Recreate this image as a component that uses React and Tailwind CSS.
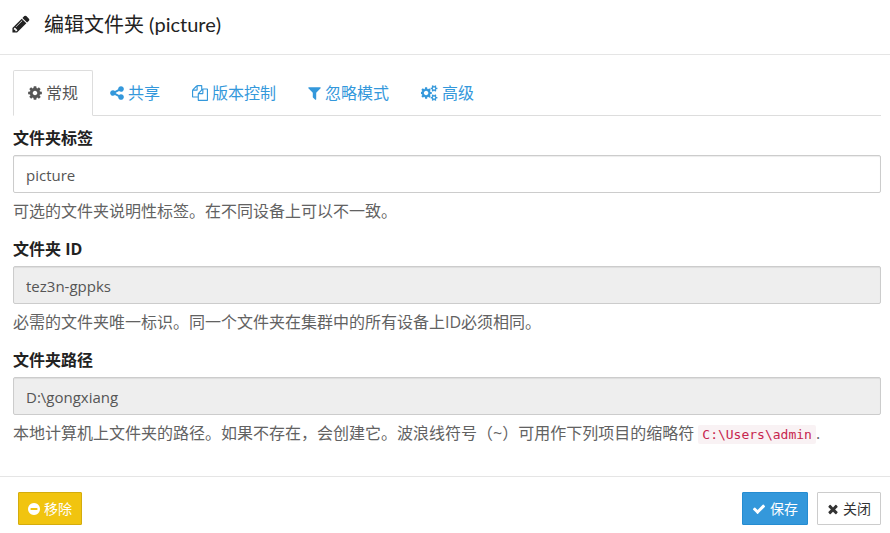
import React, { useState } from "react";

// Font glyph icons, drawn on a 1792 unit em
const icons = {
  pencil: {
    viewBox: "128 0 1536 1792",
    d: "M491 1536l91-91-235-235-91 91v107h128v128h107zm523-928q0-22-22-22-10 0-17 7l-542 542q-7 7-7 17 0 22 22 22 10 0 17-7l542-542q7-7 7-17zm-54-192l416 416-832 832h-416v-416zm683 96q0 53-37 90l-166 166-416-416 166-165q36-38 90-38 53 0 91 38l235 234q37 39 37 91z",
  },
  cog: {
    viewBox: "128 0 1536 1792",
    d: "M1152 896q0-106-75-181t-181-75-181 75-75 181 75 181 181 75 181-75 75-181zm512-109v222q0 12-8 23t-20 13l-185 28q-19 54-39 91 35 50 107 138 10 12 10 25t-9 23q-27 37-99 108t-94 71q-12 0-26-9l-138-108q-44 23-91 38-16 136-29 186-7 28-36 28h-222q-14 0-24.5-8.5t-11.5-21.5l-28-184q-49-16-90-37l-141 107q-10 9-25 9-14 0-25-11-126-114-165-168-7-10-7-23 0-12 8-23 15-21 51-66.5t54-70.5q-27-50-41-99l-183-27q-13-2-21-12.5t-8-23.5v-222q0-12 8-23t19-13l186-28q14-46 39-92-40-57-107-138-10-12-10-24 0-10 9-23 26-36 98.5-107.5t94.5-71.5q13 0 26 10l138 107q44-23 91-38 16-136 29-186 7-28 36-28h222q14 0 24.5 8.5t11.5 21.5l28 184q49 16 90 37l142-107q9-9 24-9 13 0 25 10 129 119 165 170 7 8 7 22 0 12-8 23-15 21-51 66.5t-54 70.5q26 50 41 98l183 28q13 2 21 12.5t8 23.5z",
  },
  share: {
    viewBox: "128 0 1536 1792",
    d: "M1344 1024q133 0 226.5 93.5t93.5 226.5-93.5 226.5-226.5 93.5-226.5-93.5-93.5-226.5q0-12 2-34l-360-180q-92 86-218 86-133 0-226.5-93.5t-93.5-226.5 93.5-226.5 226.5-93.5q126 0 218 86l360-180q-2-22-2-34 0-133 93.5-226.5t226.5-93.5 226.5 93.5 93.5 226.5-93.5 226.5-226.5 93.5q-126 0-218-86l-360 180q2 22 2 34t-2 34l360 180q92-86 218-86z",
  },
  files: {
    viewBox: "0 0 1792 1792",
    d: "M1696 384q40 0 68 28t28 68v1216q0 40-28 68t-68 28h-960q-40 0-68-28t-28-68v-288h-544q-40 0-68-28t-28-68v-672q0-40 20-88t48-76l408-408q28-28 76-48t88-20h416q40 0 68 28t28 68v328q68-40 128-40h416zm-544 213l-299 299h299v-299zm-640-384l-299 299h299v-299zm196 647l316-316v-416h-384v416q0 40-28 68t-68 28h-416v640h512v-256q0-40 20-88t48-76zm956 804v-1152h-384v416q0 40-28 68t-68 28h-416v640h896z",
  },
  filter: {
    viewBox: "192 0 1408 1792",
    d: "M1595 295q17 41-14 70l-493 493v742q0 42-39 59-13 5-25 5-27 0-45-19l-256-256q-19-19-19-45v-486l-493-493q-31-29-14-70 17-39 59-39h1280q42 0 59 39z",
  },
  cogs: {
    viewBox: "0 0 1920 1792",
    d: "M832 896q0-106-75-181t-181-75-181 75-75 181 75 181 181 75 181-75 75-181zm768 512q0-52-38-90t-90-38-90 38-38 90q0 53 37.5 90.5t90.5 37.5 90.5-37.5 37.5-90.5zm0-1024q0-52-38-90t-90-38-90 38-38 90q0 53 37.5 90.5t90.5 37.5 90.5-37.5 37.5-90.5zm-384 421v185q0 10-7 19.5t-16 10.5l-155 24q-11 35-32 76 34 48 90 115 7 11 7 20 0 12-7 19-23 30-82.5 89.5t-78.5 59.5q-11 0-21-7l-115-90q-37 19-77 31-11 108-23 155-7 24-30 24h-186q-11 0-20-7.5t-10-17.5l-23-153q-34-10-75-31l-118 89q-7 7-20 7-11 0-21-8-144-133-144-160 0-9 7-19 10-14 41-53t47-61q-23-44-35-82l-152-24q-10-1-17-9.5t-7-19.5v-185q0-10 7-19.5t16-10.5l155-24q11-35 32-76-34-48-90-115-7-11-7-20 0-12 7-20 22-30 82-89t79-59q11 0 21 7l115 90q34-18 77-32 11-108 23-154 7-24 30-24h186q11 0 20 7.5t10 17.5l23 153q34 10 75 31l118-89q8-7 20-7 11 0 21 8 144 133 144 160 0 8-7 19-12 16-42 54t-45 60q23 48 34 82l152 23q10 2 17 10.5t7 19.5zm640 533v140q0 16-149 31-12 27-30 52 51 113 51 138 0 4-4 7-122 71-124 71-8 0-46-47t-52-68q-20 2-30 2t-30-2q-14 21-52 68t-46 47q-2 0-124-71-4-3-4-7 0-25 51-138-18-25-30-52-149-15-149-31v-140q0-16 149-31 13-29 30-52-51-113-51-138 0-4 4-7 4-2 35-20t59-34 30-16q8 0 46 46.5t52 67.5q20-2 30-2t30 2q51-71 92-112l6-2q4 0 124 70 4 3 4 7 0 25-51 138 17 23 30 52 149 15 149 31zm0-1024v140q0 16-149 31-12 27-30 52 51 113 51 138 0 4-4 7-122 71-124 71-8 0-46-47t-52-68q-20 2-30 2t-30-2q-14 21-52 68t-46 47q-2 0-124-71-4-3-4-7 0-25 51-138-18-25-30-52-149-15-149-31v-140q0-16 149-31 13-29 30-52-51-113-51-138 0-4 4-7 4-2 35-20t59-34 30-16q8 0 46 46.5t52 67.5q20-2 30-2t30 2q51-71 92-112l6-2q4 0 124 70 4 3 4 7 0 25-51 138 17 23 30 52 149 15 149 31z",
  },
  minus: {
    viewBox: "128 0 1536 1792",
    d: "M1344 960v-128q0-26-19-45t-45-19h-768q-26 0-45 19t-19 45v128q0 26 19 45t45 19h768q26 0 45-19t19-45zm320-64q0 209-103 385.5t-279.5 279.5-385.5 103-385.5-103-279.5-279.5-103-385.5 103-385.5 279.5-279.5 385.5-103 385.5 103 279.5 279.5 103 385.5z",
  },
  check: {
    viewBox: "0 0 1792 1792",
    d: "M1671 566q0 40-28 68l-724 724-136 136q-28 28-68 28t-68-28l-136-136-362-362q-28-28-28-68t28-68l136-136q28-28 68-28t68 28l294 295 656-657q28-28 68-28t68 28l136 136q28 28 28 68z",
  },
  times: {
    viewBox: "192 0 1408 1792",
    d: "M1490 1322q0 40-28 68l-136 136q-28 28-68 28t-68-28l-294-294-294 294q-28 28-68 28t-68-28l-136-136q-28-28-28-68t28-68l294-294-294-294q-28-28-28-68t28-68l136-136q28-28 68-28t68 28l294 294 294-294q28-28 68-28t68 28l136 136q28 28 28 68t-28 68l-294 294 294 294q28 28 28 68z",
  },
};

const Icon = ({ name, className }) => (
  <svg
    viewBox={icons[name].viewBox}
    className={`shrink-0 fill-current ${className}`}
    aria-hidden="true"
  >
    <path d={icons[name].d} />
  </svg>
);

const tabs = [
  { id: "general", icon: "cog", size: "h-4 w-[14px]", text: "常规" },
  { id: "sharing", icon: "share", size: "h-4 w-[14px]", text: "共享" },
  { id: "versioning", icon: "files", size: "h-4 w-4", text: "版本控制" },
  { id: "ignores", icon: "filter", size: "h-4 w-[13px]", text: "忽略模式" },
  { id: "advanced", icon: "cogs", size: "h-4 w-[17px]", text: "高级" },
];

export default function App() {
  const [activeTab, setActiveTab] = useState("general");
  const [label, setLabel] = useState("picture");

  return (
    <div className="bg-white font-['Open_Sans','Noto_Sans_CJK_SC',sans-serif] text-base text-[#222]">
      {/* Header */}
      <header className="flex items-center gap-[14px] border-b border-[#e5e5e5] px-3 pt-2 pb-[14px]">
        <Icon name="pencil" className="h-5 w-[18px]" />
        <h4 className="font-['Lato','Noto_Sans_CJK_SC',sans-serif] text-xl leading-8">
          编辑文件夹 (picture)
        </h4>
      </header>

      <form onSubmit={(e) => e.preventDefault()}>
        <div className="pt-[15px] pr-[9px] pb-[30px] pl-[13px]">
          {/* Tabs */}
          <div role="tablist" className="flex gap-0.5 border-b border-[#ddd]">
            {tabs.map((tab) => (
              <button
                key={tab.id}
                type="button"
                role="tab"
                aria-selected={activeTab === tab.id}
                onClick={() => setActiveTab(tab.id)}
                className={`-mb-px flex h-[46px] items-center gap-1 rounded-t-xs border px-[14px] ${
                  activeTab === tab.id
                    ? "border-[#ddd] border-b-white bg-white text-[#555]"
                    : "border-transparent text-[#3498db]"
                }`}
              >
                <Icon name={tab.icon} className={tab.size} />
                <span>{tab.text}</span>
              </button>
            ))}
          </div>

          {/* Fields */}
          <div className="flex flex-col gap-4 pt-[11px]">
            <Field
              id="folderLabel"
              label="文件夹标签"
              value={label}
              onChange={(e) => setLabel(e.target.value)}
            >
              可选的文件夹说明性标签。在不同设备上可以不一致。
            </Field>
            <Field id="folderID" label="文件夹 ID" value="tez3n-gppks" readOnly>
              必需的文件夹唯一标识。同一个文件夹在集群中的所有设备上ID必须相同。
            </Field>
            <Field id="folderPath" label="文件夹路径" value="D:\gongxiang" readOnly>
              本地计算机上文件夹的路径。如果不存在，会创建它。波浪线符号（~）可用作下列项目的缩略符{" "}
              <code className="rounded-xs bg-[#f9f2f4] px-1 py-0.5 font-['DejaVu_Sans_Mono',monospace] text-[13px] text-[#c7254e]">
                C:\Users\admin
              </code>
              .
            </Field>
          </div>
        </div>

        {/* Footer */}
        <footer className="flex items-center justify-between border-t border-[#e5e5e5] pt-[15px] pr-[9px] pb-[10px] pl-[18px]">
          <FooterButton
            icon="minus"
            size="h-[14px] w-3"
            text="移除"
            className="border-[#d4ac0d] bg-[#f1c40f] text-white"
          />
          <div className="flex gap-[9px]">
            <FooterButton
              icon="check"
              size="size-[14px]"
              text="保存"
              className="border-[#258cd1] bg-[#3498db] text-white"
            />
            <FooterButton
              icon="times"
              size="h-[14px] w-3"
              text="关闭"
              className="border-[#ccc] bg-white text-[#333]"
            />
          </div>
        </footer>
      </form>
    </div>
  );
}

// Labelled text box with a help line below it
const Field = ({ id, label, children, ...inputProps }) => (
  <div>
    <label htmlFor={id} className="block leading-[22px] font-bold">
      {label}
    </label>
    <input
      id={id}
      type="text"
      aria-describedby={`${id}Help`}
      className="mt-1.5 block h-[38px] w-full rounded-xs border border-[#ccc] px-3 pt-0.5 text-[15px] text-[#555] shadow-[inset_0_1px_1px_rgba(0,0,0,0.075)] outline-none read-only:bg-[#eee]"
      {...inputProps}
    />
    <p id={`${id}Help`} className="mt-[7px] leading-[22px] text-[#626262]">
      {children}
    </p>
  </div>
);

const FooterButton = ({ icon, size, text, className }) => (
  <button
    type="button"
    className={`flex h-[33px] items-center gap-1 rounded-[1px] border px-[9px] text-sm ${className}`}
  >
    <Icon name={icon} className={size} />
    <span>{text}</span>
  </button>
);
